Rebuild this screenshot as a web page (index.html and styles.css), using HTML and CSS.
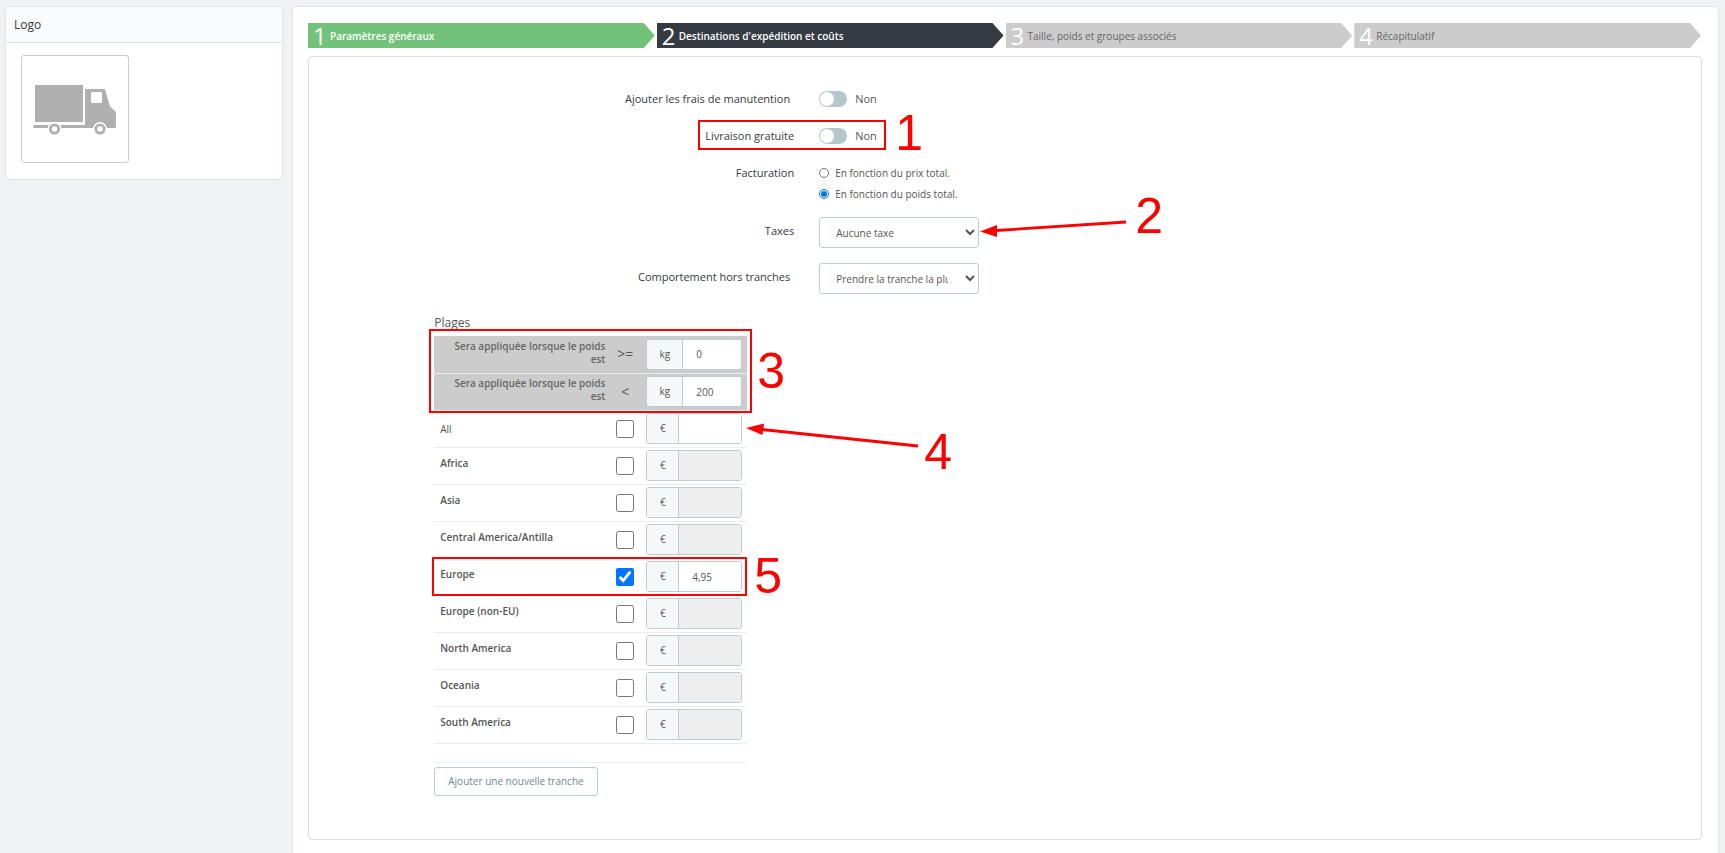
FILE: index.html
```html
<!DOCTYPE html>
<html lang="fr">
<head>
    <meta charset="UTF-8">
    <meta name="viewport" content="width=device-width, initial-scale=1.0">
    <title>Transporteur</title>
    <link rel="stylesheet" href="styles.css">
</head>
<body>
    <aside class="logo-card">
        <h2>Logo</h2>
        <div class="logo-frame">
            <svg width="84" height="51" viewBox="0 0 84 51" aria-hidden="true">
                <path fill="#b0b0b0" d="M2 0h48v37H2z"/>
                <path fill="#b0b0b0" d="M52 4h19q1 0 1.300 1l4.200 15q.5 2 2 3l4 3.500q.5.500.5 1.500v14q0 1-1 1H1.500a1.500 1.500 0 0 1 0-3H52z"/>
                <rect x="58" y="7" width="11" height="11" rx="1.500" fill="#fff"/>
                <circle cx="21.500" cy="44" r="7" fill="#fff"/>
                <circle cx="67" cy="44" r="7" fill="#fff"/>
                <circle cx="21.500" cy="44" r="4.200" fill="none" stroke="#b0b0b0" stroke-width="2.800"/>
                <circle cx="67" cy="44" r="4.200" fill="none" stroke="#b0b0b0" stroke-width="2.800"/>
            </svg>
        </div>
    </aside>

    <main class="panel">
        <ol class="steps">
            <li class="step done"><span class="step-number">1</span>Paramètres généraux</li>
            <li class="step current"><span class="step-number">2</span>Destinations d'expédition et coûts</li>
            <li class="step"><span class="step-number">3</span>Taille, poids et groupes associés</li>
            <li class="step"><span class="step-number">4</span>Récapitulatif</li>
        </ol>

        <form class="step-content">
            <div class="field">
                <label class="field-label spaced" for="handling">Ajouter les frais de manutention</label>
                <div class="switch-line">
                    <input type="checkbox" class="switch" id="handling">
                    <span>Non</span>
                </div>
            </div>

            <div class="field">
                <label class="field-label" for="freeShipping">Livraison gratuite</label>
                <div class="switch-line">
                    <input type="checkbox" class="switch" id="freeShipping">
                    <span>Non</span>
                    <span class="mark-box box-free"></span>
                    <span class="mark-number number-1">1</span>
                </div>
            </div>

            <div class="field field-radios">
                <span class="field-label" id="billingLabel">Facturation</span>
                <div class="radios" role="radiogroup" aria-labelledby="billingLabel">
                    <label><input type="radio" name="billing" value="price"> En fonction du prix total.</label>
                    <label><input type="radio" name="billing" value="weight" checked> En fonction du poids total.</label>
                </div>
            </div>

            <div class="field field-select">
                <label class="field-label" for="taxes">Taxes</label>
                <div class="control">
                    <select id="taxes">
                        <option>Aucune taxe</option>
                    </select>
                    <svg class="mark-arrow arrow-2" width="148" height="20" viewBox="0 0 148 20" aria-hidden="true">
                        <path d="M16 13.500L146 5" stroke="#f00" stroke-width="2.800"/>
                        <path d="M0 14.500L17 8v12z" fill="#f00"/>
                    </svg>
                    <span class="mark-number number-2">2</span>
                </div>
            </div>

            <div class="field field-select">
                <label class="field-label spaced" for="outOfRange">Comportement hors tranches</label>
                <div class="control">
                    <select id="outOfRange">
                        <option>Prendre la tranche la plus grande</option>
                    </select>
                </div>
            </div>

            <section class="ranges">
                <h3>Plages</h3>
                <div class="ranges-body">
                    <table>
                        <colgroup>
                            <col class="col-name">
                            <col class="col-check">
                            <col class="col-price">
                        </colgroup>
                        <thead>
                            <tr>
                                <th><label for="rangeMin">Sera appliquée lorsque le poids est</label></th>
                                <td class="operator">&gt;=</td>
                                <td><div class="input-group weight"><span>kg</span><input type="text" id="rangeMin" value="0"></div></td>
                            </tr>
                            <tr>
                                <th><label for="rangeMax">Sera appliquée lorsque le poids est</label></th>
                                <td class="operator">&lt;</td>
                                <td><div class="input-group weight"><span>kg</span><input type="text" id="rangeMax" value="200"></div></td>
                            </tr>
                        </thead>
                        <tbody>
                            <tr class="all">
                                <td class="zone"><label for="zoneAll">All</label></td>
                                <td class="check"><input type="checkbox" id="zoneAll"></td>
                                <td><div class="input-group"><span>€</span><input type="text" aria-label="All"></div></td>
                            </tr>
                            <tr>
                                <td class="zone"><label for="zoneAfrica">Africa</label></td>
                                <td class="check"><input type="checkbox" id="zoneAfrica"></td>
                                <td><div class="input-group"><span>€</span><input type="text" aria-label="Africa" disabled></div></td>
                            </tr>
                            <tr>
                                <td class="zone"><label for="zoneAsia">Asia</label></td>
                                <td class="check"><input type="checkbox" id="zoneAsia"></td>
                                <td><div class="input-group"><span>€</span><input type="text" aria-label="Asia" disabled></div></td>
                            </tr>
                            <tr>
                                <td class="zone"><label for="zoneCentral">Central America/Antilla</label></td>
                                <td class="check"><input type="checkbox" id="zoneCentral"></td>
                                <td><div class="input-group"><span>€</span><input type="text" aria-label="Central America/Antilla" disabled></div></td>
                            </tr>
                            <tr>
                                <td class="zone"><label for="zoneEurope">Europe</label></td>
                                <td class="check"><input type="checkbox" id="zoneEurope" checked></td>
                                <td><div class="input-group"><span>€</span><input type="text" aria-label="Europe" value="4,95"></div></td>
                            </tr>
                            <tr>
                                <td class="zone"><label for="zoneNonEu">Europe (non-EU)</label></td>
                                <td class="check"><input type="checkbox" id="zoneNonEu"></td>
                                <td><div class="input-group"><span>€</span><input type="text" aria-label="Europe (non-EU)" disabled></div></td>
                            </tr>
                            <tr>
                                <td class="zone"><label for="zoneNorth">North America</label></td>
                                <td class="check"><input type="checkbox" id="zoneNorth"></td>
                                <td><div class="input-group"><span>€</span><input type="text" aria-label="North America" disabled></div></td>
                            </tr>
                            <tr>
                                <td class="zone"><label for="zoneOceania">Oceania</label></td>
                                <td class="check"><input type="checkbox" id="zoneOceania"></td>
                                <td><div class="input-group"><span>€</span><input type="text" aria-label="Oceania" disabled></div></td>
                            </tr>
                            <tr>
                                <td class="zone"><label for="zoneSouth">South America</label></td>
                                <td class="check"><input type="checkbox" id="zoneSouth"></td>
                                <td><div class="input-group"><span>€</span><input type="text" aria-label="South America" disabled></div></td>
                            </tr>
                        </tbody>
                        <tfoot>
                            <tr><td colspan="3"></td></tr>
                        </tfoot>
                    </table>

                    <span class="mark-box box-range"></span>
                    <span class="mark-number number-3">3</span>
                    <svg class="mark-arrow arrow-4" width="176" height="26" viewBox="0 0 176 26" aria-hidden="true">
                        <path d="M16 7.500L172 24" stroke="#f00" stroke-width="2.800"/>
                        <path d="M0 6L18 1.500L16.500 13z" fill="#f00"/>
                    </svg>
                    <span class="mark-number number-4">4</span>
                    <span class="mark-box box-europe"></span>
                    <span class="mark-number number-5">5</span>
                </div>
                <button type="button" class="add-range">Ajouter une nouvelle tranche</button>
            </section>
        </form>
    </main>
</body>
</html>
```
FILE: styles.css
```css
* {
    box-sizing: border-box;
}

body {
    display: flex;
    align-items: flex-start;
    gap: 9px;
    min-height: 100vh;
    margin: 0;
    padding: 6px 6px 0 5px;
    background-color: #eff1f2;
    color: #555;
    font: 11px/16px "Open Sans", sans-serif;
}

.logo-card {
    flex: 0 0 278px;
    height: 174px;
    background-color: #fff;
    border: 1px solid #dbe6e9;
    border-radius: 4px;
}

.logo-card h2 {
    margin: 0;
    padding: 10px 8px 9px;
    background-color: #fafbfc;
    border-bottom: 1px solid #d3e4e5;
    border-radius: 4px 4px 0 0;
    color: #363a41;
    font-size: 12px;
    font-weight: 400;
}

.logo-frame {
    display: flex;
    align-items: center;
    justify-content: center;
    width: 108px;
    height: 108px;
    margin: 12px 15px;
    padding-top: 2px;
    border: 1px solid #ccc;
    border-radius: 3px;
}

.panel {
    flex: 1;
    min-height: calc(100vh - 6px);
    padding: 16px 16px 14px 15px;
    background-color: #fff;
    border: 1px solid #dbe6e9;
    border-bottom: 0;
    border-radius: 4px 4px 0 0;
}

/* wizard steps */
.steps {
    display: flex;
    gap: 2px;
    margin: 0 1px 8px 0;
    padding: 0;
    list-style: none;
}

.step {
    display: flex;
    flex: 1;
    align-items: center;
    height: 25px;
    padding-left: 5px;
    background-color: #ccc;
    clip-path: polygon(0 0, calc(100% - 11px) 0, 100% 50%, calc(100% - 11px) 100%, 0 100%);
    color: #666;
    font-size: 10px;
}

.step.done,
.step.current {
    color: #fff;
    font-weight: 600;
}

.step.done {
    background-color: #72c279;
}

.step.current {
    background-color: #363a41;
}

.step-number {
    width: 17px;
    color: #fff;
    font-size: 24px;
    font-weight: 400;
}

.step-content {
    padding: 34px 0 43px;
    border: 1px solid #d9dbdd;
    border-radius: 4px;
}

/* form rows */
.field {
    display: grid;
    grid-template-columns: 35% 1fr;
    column-gap: 23px;
    margin-bottom: 21px;
}

.field-radios,
.field-select {
    margin-bottom: 15px;
}

.field-label {
    padding-right: 2px;
    color: #363a41;
    text-align: right;
}

.field-label.spaced {
    padding-right: 6px;
}

.field-select .field-label {
    padding-top: 6px;
}

.switch-line {
    position: relative;
    display: flex;
    align-items: center;
    gap: 8px;
}

.switch {
    appearance: none;
    width: 28px;
    height: 16px;
    margin: 0;
    padding: 1px;
    background-color: #b3c7cd;
    border-radius: 8px;
}

.switch::before {
    content: "";
    display: block;
    width: 14px;
    height: 14px;
    background-color: #fff;
    border-radius: 50%;
}

.switch:checked {
    background-color: #72c279;
}

.switch:checked::before {
    margin-left: 12px;
}

.radios {
    display: flex;
    flex-direction: column;
    gap: 5px;
    font-size: 10px;
}

.radios label {
    display: flex;
    align-items: center;
    gap: 6px;
}

.radios input {
    width: 10px;
    height: 10px;
    margin: 0;
}

.control {
    position: relative;
}

select {
    display: block;
    width: 160px;
    height: 31px;
    padding: 0 14px 0 12px;
    background-color: #fff;
    border: 1px solid #bbcdd2;
    border-radius: 3px;
    color: #555;
    font: 10px "Open Sans", sans-serif;
}

/* ranges table */
.ranges {
    margin: 21px 0 0 9%;
}

.ranges h3 {
    margin: 0 0 5px;
    color: #555;
    font-size: 12px;
    font-weight: 400;
}

.ranges-body {
    position: relative;
    width: 313px;
}

table {
    width: 100%;
    table-layout: fixed;
    border-collapse: collapse;
}

.col-name {
    width: 176px;
}

.col-check {
    width: 30px;
}

tr {
    height: 37px;
    border-bottom: 1px solid #eaedef;
}

th,
td {
    padding: 0;
}

thead {
    background-color: #ccc;
}

th {
    padding: 0 5px 3px 6px;
    color: #666;
    font-size: 10px;
    font-weight: 600;
    line-height: 13px;
    text-align: right;
}

th label {
    display: block;
}

.operator {
    font-size: 14px;
    text-align: center;
}

.zone {
    padding: 0 6px 6px;
    color: #555;
    font-size: 10px;
    font-weight: 600;
}

.all .zone {
    padding-bottom: 0;
    font-weight: 400;
}

.check input {
    display: block;
    width: 18px;
    height: 18px;
    margin: 0 auto;
}

.input-group {
    display: flex;
    width: 96px;
    height: 31px;
    margin-left: 6px;
    overflow: hidden;
    border: 1px solid #bbcdd2;
    border-radius: 3px;
    font-size: 10px;
}

.input-group span {
    flex: 0 0 32px;
    background-color: #f5f8f9;
    border-right: 1px solid #bbcdd2;
    line-height: 29px;
    text-align: center;
}

.input-group.weight span {
    flex-basis: 36px;
}

.input-group input {
    flex: 1;
    min-width: 0;
    padding: 0 13px;
    background-color: #fff;
    border: 0;
    color: #555;
    font: 10px "Open Sans", sans-serif;
}

.input-group input:disabled {
    background-color: #eee;
}

tfoot tr {
    height: 19px;
}

.add-range {
    height: 29px;
    margin-top: 4px;
    padding: 0 13px;
    background-color: #fff;
    border: 1px solid #bbcdd2;
    border-radius: 3px;
    color: #6c868e;
    font: 500 10px "Open Sans", sans-serif;
}

/* red guide marks laid over the form */
.mark-box {
    position: absolute;
    border: 2px solid #f00;
    pointer-events: none;
}

.mark-number {
    position: absolute;
    color: #f00;
    font: 50px/50px "Liberation Sans", sans-serif;
}

.mark-arrow {
    position: absolute;
}

.box-free {
    top: -8px;
    left: -121px;
    width: 188px;
    height: 30px;
}

.number-1 {
    top: -20px;
    left: 76px;
}

.arrow-2 {
    top: 0;
    left: 161px;
}

.number-2 {
    top: -26px;
    left: 316px;
}

.box-range {
    top: -7px;
    left: -5px;
    width: 323px;
    height: 84px;
}

.number-3 {
    top: 10px;
    left: 323px;
}

.arrow-4 {
    top: 86px;
    left: 312px;
}

.number-4 {
    top: 91px;
    left: 490px;
}

.box-europe {
    top: 221px;
    left: -2px;
    width: 315px;
    height: 39px;
}

.number-5 {
    top: 215px;
    left: 320px;
}
```
